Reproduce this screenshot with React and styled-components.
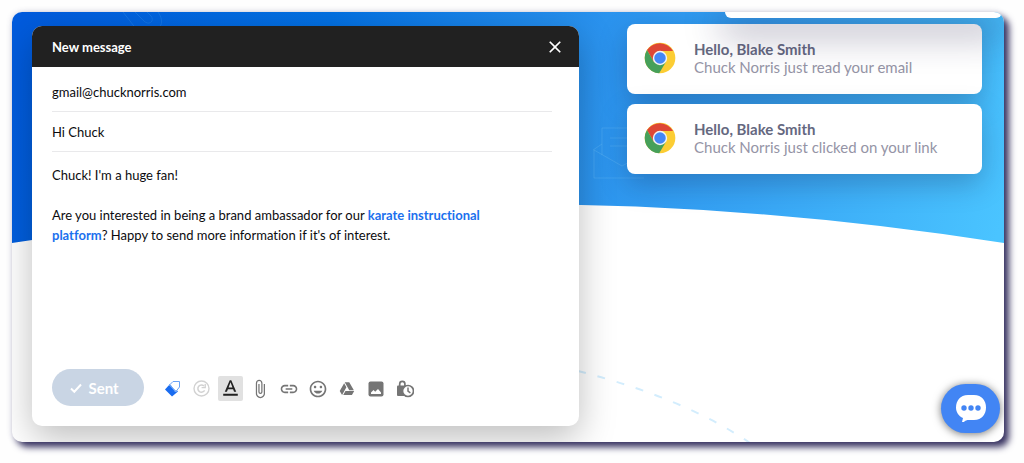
import React from "react";
import styled, { createGlobalStyle } from "styled-components";
import {
  MdAttachFile,
  MdClose,
  MdLink,
  MdTagFaces,
  MdTextFormat
} from "react-icons/md";

const theme = {
  white: "#ffffff",
  black: "#212121",
  ink: "#0b0b0e",
  blue: "#1b70ee",
  chatBlue: "#4285f4",
  grey: "#757575",
  line: "#e9e9eb",
  sent: "#c9d5e4",
  title: "#65687f",
  muted: "#9594a6"
};

const GlobalStyle = createGlobalStyle`
  * {
    box-sizing: border-box;
  }
  body {
    margin: 0;
    background: #fefefe;
    font-family: Lato, "Open Sans", sans-serif;
    font-variant-ligatures: none;
    color: ${theme.ink};
  }
  button,
  input {
    font-family: inherit;
  }
`;

const notifications = [
  { id: 1, title: "Hello, Blake Smith", text: "Chuck Norris just read your email" },
  { id: 2, title: "Hello, Blake Smith", text: "Chuck Norris just clicked on your link" }
];

const Backdrop = () => (
  <Art viewBox="0 0 992 430" preserveAspectRatio="none" aria-hidden="true">
    <defs>
      <linearGradient id="sky" gradientUnits="userSpaceOnUse" x1="0" y1="60" x2="970" y2="290">
        <stop offset="0" stopColor="#005bdd" />
        <stop offset="0.3" stopColor="#0370e2" />
        <stop offset="0.57" stopColor="#2b93ee" />
        <stop offset="0.75" stopColor="#37a5f5" />
        <stop offset="1" stopColor="#4ac4ff" />
      </linearGradient>
    </defs>
    <path d="M0 0H992V231Q496 153 0 231Z" fill="url(#sky)" />
    <g fill="none" stroke="#5cb4f5" strokeOpacity="0.45">
      <path d="M111 0l14 18M123 0l9 9c5 5 11 0 7-5l-4-4M146 0c6 8 4 16-3 18" strokeOpacity="0.2" />
      <path d="M590 143v-27h40M598 126h30M598 134h30M581 138l9-6M582 138v28h50M582 138l28 16 18-10" />
    </g>
    <path
      d="M566 359Q672 386 738 431"
      fill="none"
      stroke="#d3edfd"
      strokeWidth="2"
      strokeDasharray="8 12"
    />
  </Art>
);

const ChromeLogo = () => (
  <svg width="32" height="32" viewBox="0 0 48 48" aria-hidden="true">
    <circle cx="24" cy="24" r="23" fill="#fccd33" />
    <path d="M24 24L14.5 29.5 4.5 12A23 23 0 0 1 43.5 13.5H24Z" fill="#de4735" />
    <path d="M14.5 29.5L4.5 12A23 23 0 0 0 22.8 47L33 29.5Z" fill="#46a05a" />
    <circle cx="24" cy="24" r="10.8" fill="#f3f3f3" />
    <circle cx="24" cy="24" r="8.6" fill="#4487f6" />
  </svg>
);

const CheckIcon = () => (
  <svg width="14" height="14" viewBox="0 0 14 14" aria-hidden="true">
    <path d="M2 7.500l3.300 3.200L12 3.500" fill="none" stroke="currentColor" strokeWidth="2" />
  </svg>
);

const TagIcon = () => (
  <svg width="17" height="17" viewBox="0 0 17 17" aria-hidden="true">
    <path d="M1 9.500L6 4l8 7.500L8 16.500z" fill="#1a6cf0" />
    <path d="M6 4.500L9 1.500h6.500v5.500l-4 5z" fill="#fff" stroke="#6aa3f7" />
    <path d="M5 5l8 7" stroke="#6aa3f7" />
  </svg>
);

const ReloadIcon = () => (
  <svg width="17" height="17" viewBox="0 0 17 17" fill="none" stroke="#d2d2d2" aria-hidden="true">
    <circle cx="8.5" cy="8.5" r="7.5" strokeWidth="1.4" />
    <path d="M11.6 10.4A3.6 3.6 0 1 1 11 6" strokeWidth="1.5" />
    <path d="M12.2 4v3.6H8.6" strokeWidth="1.4" />
  </svg>
);

const DriveIcon = () => (
  <svg width="16" height="16" viewBox="0 0 24 24" fill="currentColor" aria-hidden="true">
    <path d="M7.7 3.5L1.1 15l3.5 6 6.5-11.5zM9.7 15l-3.4 6h13.1l3.4-6zM22.3 14L15.4 2H8.6l6.8 12z" />
  </svg>
);

const PhotoIcon = () => (
  <svg width="16" height="16" viewBox="0 0 16 16" aria-hidden="true">
    <rect x="0.5" y="0.5" width="15" height="15" rx="2" fill="currentColor" />
    <path d="M3 13v-1.500l2.500-2.500 1.700 1.700L10 8l3 3.500V13z" fill="#fff" />
  </svg>
);

const LockClockIcon = () => (
  <svg width="18" height="18" viewBox="0 0 18 18" fill="none" aria-hidden="true">
    <path d="M3.7 6V4a2.600 2.600 0 0 1 5.200 0v2" stroke="currentColor" strokeWidth="1.7" />
    <rect x="1" y="5.500" width="11" height="10.500" rx="1" fill="currentColor" />
    <circle cx="12" cy="11" r="5.500" fill="#fff" stroke="currentColor" strokeWidth="1.7" />
    <path d="M12 7.500v3.700l2.400 1.600" stroke="currentColor" strokeWidth="1.5" />
  </svg>
);

const ChatIcon = () => (
  <svg width="32" height="30" viewBox="0 0 32 30" aria-hidden="true">
    <path
      d="M13 1h6c8 0 12 6 12 12.500S27 26 19 26h-5c-2 0-4 .5-5 2H7l1-4C3.500 22 1 18 1 13.500 1 7 5 1 13 1z"
      fill="#fff"
    />
    <g fill={theme.chatBlue}>
      <circle cx="9" cy="14" r="2.700" />
      <circle cx="16" cy="14" r="2.700" />
      <circle cx="23" cy="14" r="2.700" />
    </g>
  </svg>
);

const tools = [
  { label: "Templates", icon: <TagIcon /> },
  { label: "Follow up", icon: <ReloadIcon /> },
  { label: "Text format", icon: <MdTextFormat size={25} />, active: true },
  { label: "Attach file", icon: <MdAttachFile size={20} /> },
  { label: "Insert link", icon: <MdLink size={20} /> },
  { label: "Insert emoji", icon: <MdTagFaces size={20} /> },
  { label: "Insert from Drive", icon: <DriveIcon /> },
  { label: "Insert photo", icon: <PhotoIcon /> },
  { label: "Confidential mode", icon: <LockClockIcon /> }
];

const Notification = ({ title, text }) => (
  <NoticeCard>
    <ChromeLogo />
    <div>
      <NoticeTitle>{title}</NoticeTitle>
      <NoticeText>{text}</NoticeText>
    </div>
  </NoticeCard>
);

const App = () => (
  <>
    <GlobalStyle />
    <Stage>
      <Backdrop />
      <Compose>
        <ComposeHeader>
          <ComposeTitle>New message</ComposeTitle>
          <CloseButton aria-label="Close">
            <MdClose size={20} />
          </CloseButton>
        </ComposeHeader>
        <ComposeBody>
          <Field aria-label="To" defaultValue="gmail@chucknorris.com" />
          <Field aria-label="Subject" defaultValue="Hi Chuck" />
          <Message>
            <p>Chuck! I'm a huge fan!</p>
            <p>
              Are you interested in being a brand ambassador for our{" "}
              <a href="#platform">karate instructional platform</a>? Happy to
              send more information if it's of interest.
            </p>
          </Message>
          <Toolbar>
            <SentButton>
              <CheckIcon />
              Sent
            </SentButton>
            <Tools>
              {tools.map(({ label, icon, active }) => (
                <ToolButton key={label} aria-label={label} $active={active}>
                  {icon}
                </ToolButton>
              ))}
            </Tools>
          </Toolbar>
        </ComposeBody>
      </Compose>
      <Notices>
        {notifications.map(({ id, title, text }) => (
          <Notification key={id} title={title} text={text} />
        ))}
      </Notices>
      <LeavingCard />
      <ChatButton aria-label="Open chat">
        <ChatIcon />
      </ChatButton>
    </Stage>
  </>
);

const Stage = styled.main`
  position: relative;
  display: flex;
  justify-content: space-between;
  align-items: flex-start;
  gap: 20px;
  margin: 12px 20px 20px 12px;
  padding: 14px 22px 16px 20px;
  border-radius: 10px;
  background: ${theme.white};
  box-shadow: 5px 5px 7px 0 #373260, 0 0 6px rgba(60, 55, 110, 0.2);
  overflow: hidden;
`;

const Art = styled.svg`
  position: absolute;
  inset: 0;
  width: 100%;
  height: 100%;
`;

const Compose = styled.section`
  position: relative;
  flex: 0 1 547px;
  min-width: 0;
  border-radius: 10px;
  background: ${theme.white};
  box-shadow: 0 12px 36px rgba(0, 0, 0, 0.26);
`;

const ComposeHeader = styled.header`
  display: flex;
  justify-content: space-between;
  align-items: center;
  height: 41px;
  padding: 0 14px 0 20px;
  border-radius: 10px 10px 0 0;
  background: ${theme.black};
  color: ${theme.white};
`;

const ComposeTitle = styled.h1`
  margin: 0;
  font-size: 13px;
  font-weight: 700;
`;

const CloseButton = styled.button`
  display: flex;
  padding: 0;
  border: none;
  background: transparent;
  color: ${theme.white};
`;

const ComposeBody = styled.div`
  padding: 5px 27px 20px 20px;
`;

const Field = styled.input`
  display: block;
  width: 100%;
  height: 40px;
  padding: 0;
  border: none;
  border-bottom: 1px solid ${theme.line};
  background: transparent;
  font-size: 13px;
  color: ${theme.ink};
  outline: none;
`;

const Message = styled.div`
  min-height: 217px;
  padding-top: 13px;
  font-size: 13px;
  line-height: 20px;

  p {
    max-width: 450px;
    margin: 0 0 20px;
  }

  a {
    color: ${theme.blue};
    font-weight: 700;
    text-decoration: none;
  }
`;

const Toolbar = styled.div`
  display: flex;
  align-items: center;
  gap: 16px;
`;

const SentButton = styled.button`
  display: flex;
  justify-content: center;
  align-items: center;
  gap: 5px;
  width: 92px;
  height: 37px;
  padding: 0 8px 0 0;
  border: none;
  border-radius: 19px;
  background: ${theme.sent};
  color: ${theme.white};
  font-size: 15px;
  font-weight: 700;
`;

const Tools = styled.div`
  display: flex;
  gap: 4px;
  padding-top: 2px;
`;

const ToolButton = styled.button`
  display: flex;
  justify-content: center;
  align-items: center;
  width: 25px;
  height: 25px;
  padding: 0;
  border: none;
  border-radius: 2px;
  background: ${({ $active }) => ($active ? "#e1e1e1" : "transparent")};
  color: ${({ $active }) => ($active ? theme.black : theme.grey)};
`;

const Notices = styled.aside`
  position: relative;
  display: flex;
  flex-direction: column;
  gap: 10px;
  flex: 0 1 355px;
  margin-top: -2px;
`;

const NoticeCard = styled.article`
  display: flex;
  align-items: center;
  gap: 18px;
  min-height: 70px;
  padding: 0 17px 2px;
  border-radius: 8px;
  background: ${theme.white};
  box-shadow: 0 10px 28px rgba(20, 25, 60, 0.26);
`;

const NoticeTitle = styled.h2`
  margin: 0;
  font-size: 15px;
  line-height: 18px;
  font-weight: 700;
  color: ${theme.title};
`;

const NoticeText = styled.p`
  margin: 0;
  font-size: 15px;
  line-height: 18px;
  color: ${theme.muted};
`;

// the notification that is sliding out above the list
const LeavingCard = styled.div`
  position: absolute;
  top: 0;
  right: 2px;
  width: 277px;
  height: 6px;
  border-radius: 0 0 6px 6px;
  background: ${theme.white};
  box-shadow: 0 10px 36px 6px rgba(30, 25, 70, 0.4);
`;

const ChatButton = styled.button`
  position: absolute;
  right: 4px;
  bottom: 9px;
  display: flex;
  justify-content: center;
  align-items: center;
  width: 59px;
  height: 49px;
  padding: 0;
  border: none;
  border-radius: 25px;
  background: ${theme.chatBlue};
  box-shadow: 0 1px 8px rgba(0, 0, 0, 0.55);
`;

export default App;
